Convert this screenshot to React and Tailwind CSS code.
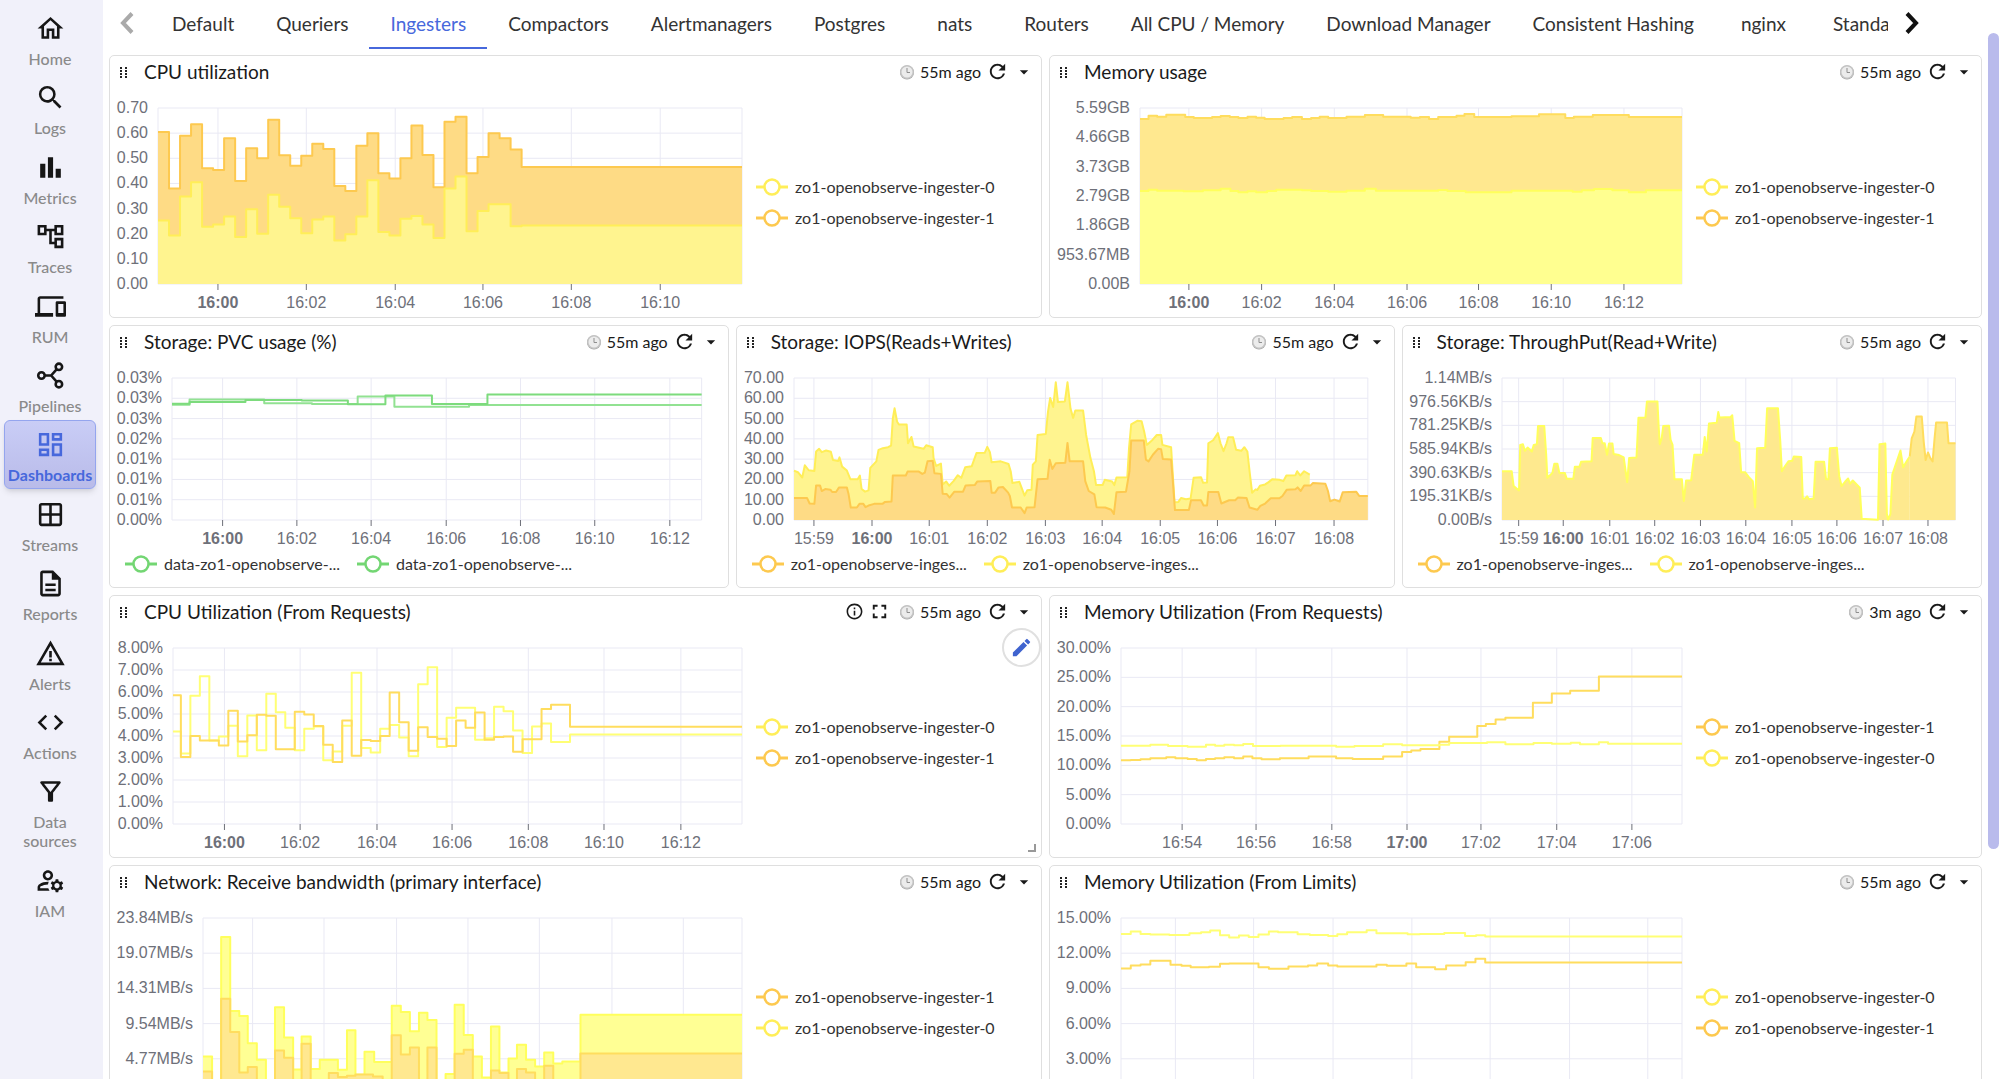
import React from "react";
import {
  MdArrowDropDown,
  MdBarChart,
  MdCode,
  MdDevices,
  MdEdit,
  MdFullscreen,
  MdOutlineAccountTree,
  MdOutlineDashboard,
  MdOutlineDescription,
  MdOutlineFilterAlt,
  MdOutlineHome,
  MdOutlineInfo,
  MdOutlineManageAccounts,
  MdRefresh,
  MdSearch,
  MdWarningAmber,
  MdOutlineWindow,
} from "react-icons/md";

const YELLOW = "#ffee58";
const AMBER = "#fdc94f";
const LEMON = "#ffff5c";
const SAND = "#ffdd5e";
const GREEN = "#73d673";

const PipelineIcon = ({ className }) => (
  <svg viewBox="0 0 24 24" fill="none" stroke="currentColor" strokeWidth="2" className={className}>
    <circle cx="5" cy="12" r="2.500" />
    <circle cx="18.500" cy="5.300" r="2.500" />
    <circle cx="18.500" cy="18.700" r="2.500" />
    <path d="M7.500 12h5l4.200-4.800M12.500 12l4.200 4.800" />
  </svg>
);

const ClockIcon = ({ className }) => (
  <svg viewBox="0 0 16 16" fill="none" className={className}>
    <circle cx="8" cy="8.500" r="7" fill="#a3a3a3" />
    <circle cx="8" cy="8" r="7" fill="#c4c4c4" />
    <circle cx="8" cy="8" r="5.500" fill="#ececec" />
    <path d="M8 4v4.500h3" stroke="#8f8f8f" strokeWidth="1" />
  </svg>
);

const DragIcon = ({ className }) => (
  <svg viewBox="0 0 8 12" fill="#222222" className={className}>
    {[1, 4, 7, 10].map((y) => (
      <g key={y}>
        <rect x="0" y={y} width="2" height="2" />
        <rect x="5" y={y} width="2" height="2" />
      </g>
    ))}
  </svg>
);

const navItems = [
  { name: "Home", icon: MdOutlineHome },
  { name: "Logs", icon: MdSearch },
  { name: "Metrics", icon: MdBarChart },
  { name: "Traces", icon: MdOutlineAccountTree },
  { name: "RUM", icon: MdDevices },
  { name: "Pipelines", icon: PipelineIcon },
  { name: "Dashboards", icon: MdOutlineDashboard, active: true },
  { name: "Streams", icon: MdOutlineWindow },
  { name: "Reports", icon: MdOutlineDescription },
  { name: "Alerts", icon: MdWarningAmber },
  { name: "Actions", icon: MdCode },
  { name: "Data sources", icon: MdOutlineFilterAlt },
  { name: "IAM", icon: MdOutlineManageAccounts },
];

const tabs = [
  "Default",
  "Queriers",
  "Ingesters",
  "Compactors",
  "Alertmanagers",
  "Postgres",
  "nats",
  "Routers",
  "All CPU / Memory",
  "Download Manager",
  "Consistent Hashing",
  "nginx",
  "Standalone",
];

// evenly spaced samples -> flat [x, y, x, y...] list
const spread = (start, first, width, values) =>
  values.flatMap((v, i) => [i === 0 ? start : first + width * (i - 1), v]);

const ingester0 = { label: "zo1-openobserve-ingester-0", color: YELLOW };
const ingester1 = { label: "zo1-openobserve-ingester-1", color: AMBER };

const panels = [
  {
    title: "CPU utilization",
    span: "col-span-24",
    inset: "pl-[48px]",
    x: [0, 53],
    y: [0, 0.7],
    yLabels: ["0.70", "0.60", "0.50", "0.40", "0.30", "0.20", "0.10", "0.00"],
    ticks: [5.44, 13.46, 21.53, 29.49, 37.51, 45.58],
    xLabels: ["16:00", "16:02", "16:04", "16:06", "16:08", "16:10"],
    legend: [ingester0, ingester1],
    series: [
      {
        step: true,
        stroke: AMBER,
        fill: "#fedb85",
        data: spread(0, 1, 1, [
          0.605, 0.38, 0.59, 0.635, 0.46, 0.453, 0.58, 0.41, 0.54, 0.5, 0.653, 0.512, 0.47, 0.51, 0.558,
          0.537, 0.39, 0.37, 0.55, 0.6, 0.44, 0.42, 0.5, 0.63, 0.513, 0.385, 0.645, 0.665, 0.44, 0.505,
          0.6, 0.58, 0.535, 0.465,
        ]),
      },
      {
        step: true,
        stroke: YELLOW,
        fill: "#fff48f",
        data: spread(0, 1, 1, [
          0.253, 0.193, 0.348, 0.405, 0.228, 0.237, 0.268, 0.187, 0.297, 0.2, 0.355, 0.307, 0.262, 0.202,
          0.257, 0.268, 0.173, 0.198, 0.268, 0.413, 0.207, 0.193, 0.26, 0.27, 0.237, 0.183, 0.38, 0.428,
          0.21, 0.29, 0.317, 0.317, 0.23, 0.233,
        ]),
      },
    ],
  },
  {
    title: "Memory usage",
    span: "col-span-24",
    inset: "pl-[90px]",
    x: [162, 1049],
    y: [853, 323],
    yLabels: ["5.59GB", "4.66GB", "3.73GB", "2.79GB", "1.86GB", "953.67MB", "0.00B"],
    ticks: [242, 361, 480, 599, 716, 835, 954],
    xLabels: ["16:00", "16:02", "16:04", "16:06", "16:08", "16:10", "16:12"],
    legend: [ingester0, ingester1],
    series: [
      {
        step: true,
        stroke: SAND,
        fill: "#ffe88f",
        data: [
          162, 356, 176, 346, 190, 349, 205, 343, 236, 350, 250, 353, 280, 350, 294, 347, 309, 350, 323, 353,
          338, 349, 352, 352, 366, 356, 397, 353, 411, 350, 427, 356, 442, 353, 456, 349, 470, 353, 500, 349,
          530, 344, 560, 349, 605, 352, 620, 350, 635, 356, 650, 350, 680, 346, 693, 341, 709, 350, 770, 348,
          815, 342, 858, 353, 872, 349, 903, 344, 962, 350,
        ],
      },
      {
        step: true,
        stroke: LEMON,
        fill: "#ffff90",
        data: [
          162, 573, 176, 569, 190, 572, 233, 574, 265, 571, 294, 566, 310, 573, 323, 577, 338, 574, 352, 577,
          370, 573, 385, 569, 427, 571, 442, 573, 470, 575, 500, 572, 530, 566, 548, 572, 650, 570, 665, 573,
          695, 577, 770, 572, 870, 575, 885, 571, 905, 567, 935, 571, 962, 577, 990, 571,
        ],
      },
    ],
  },
  {
    title: "Storage: PVC usage (%)",
    span: "col-span-16",
    inset: "pl-[62px] pr-[26px]",
    below: true,
    x: [177, 1475],
    y: [618, 187],
    yLabels: ["0.03%", "0.03%", "0.03%", "0.02%", "0.01%", "0.01%", "0.01%", "0.00%"],
    ticks: [301, 483, 665, 849, 1031, 1213, 1397],
    xLabels: ["16:00", "16:02", "16:04", "16:06", "16:08", "16:10", "16:12"],
    legend: [
      { label: "data-zo1-openobserve-...", color: GREEN },
      { label: "data-zo1-openobserve-...", color: GREEN },
    ],
    series: [
      {
        step: true,
        stroke: "#92e292",
        data: [177, 268, 220, 252, 403, 264, 520, 266, 632, 243, 722, 274, 905, 269],
      },
      {
        step: true,
        stroke: "#7ddb7d",
        data: [177, 265, 220, 260, 357, 254, 495, 255, 608, 267, 700, 240, 814, 266, 950, 237],
      },
    ],
  },
  {
    title: "Storage: IOPS(Reads+Writes)",
    span: "col-span-17",
    inset: "pl-[57px] pr-[26px]",
    below: true,
    x: [148, 1472],
    y: [618, 187],
    yLabels: ["70.00", "60.00", "50.00", "40.00", "30.00", "20.00", "10.00", "0.00"],
    ticks: [194, 328, 460, 594, 728, 859, 993, 1125, 1259, 1394],
    xLabels: ["15:59", "16:00", "16:01", "16:02", "16:03", "16:04", "16:05", "16:06", "16:07", "16:08"],
    legend: [
      { label: "zo1-openobserve-inges...", color: AMBER },
      { label: "zo1-openobserve-inges...", color: YELLOW },
    ],
    series: [
      {
        stroke: YELLOW,
        fill: "#fff48f",
        data: [
          148, 468, 157, 473, 167, 489, 173, 452, 182, 467, 195, 469, 199, 410, 206, 402, 212, 412, 222, 407,
          233, 411, 238, 436, 250, 439, 253, 428, 259, 456, 270, 468, 278, 494, 295, 494, 300, 483, 304, 524,
          312, 532, 320, 528, 324, 460, 338, 440, 343, 405, 353, 400, 365, 397, 372, 392, 376, 310, 380, 279,
          386, 320, 390, 328, 408, 328, 411, 385, 419, 366, 424, 395, 447, 402, 453, 391, 468, 397, 470, 430,
          476, 454, 487, 447, 491, 510, 499, 501, 506, 514, 516, 500, 526, 482, 534, 490, 543, 458, 558, 455,
          569, 415, 588, 414, 594, 396, 600, 412, 604, 443, 625, 440, 643, 448, 648, 470, 652, 506, 668, 502,
          680, 544, 686, 528, 696, 526, 699, 450, 706, 440, 710, 360, 729, 357, 734, 290, 739, 248, 746, 275,
          752, 200, 757, 260, 773, 258, 779, 200, 786, 280, 792, 308, 797, 286, 815, 286, 822, 360, 832, 430,
          840, 470, 845, 512, 860, 512, 865, 496, 882, 501, 887, 512, 892, 489, 917, 488, 921, 400, 926, 328,
          940, 317, 950, 318, 956, 350, 962, 390, 975, 375, 985, 360, 995, 360, 998, 390, 1018, 397, 1022, 480,
          1026, 564, 1035, 563, 1041, 551, 1052, 555, 1063, 553, 1070, 490, 1087, 488, 1092, 505, 1101, 504,
          1104, 385, 1115, 376, 1126, 354, 1132, 385, 1139, 409, 1146, 385, 1150, 367, 1161, 367, 1168, 405,
          1180, 408, 1187, 397, 1194, 410, 1200, 480, 1205, 535, 1213, 525, 1217, 527, 1223, 514, 1235, 510,
          1243, 503, 1252, 494, 1268, 496, 1277, 500, 1284, 483, 1305, 482, 1309, 470, 1316, 483, 1325, 470,
          1338, 480,
        ],
      },
      {
        stroke: AMBER,
        fill: "#fedb85",
        data: [
          148, 551, 178, 551, 184, 568, 195, 569, 199, 513, 208, 513, 212, 530, 220, 524, 232, 526, 236, 533,
          245, 533, 252, 519, 270, 519, 274, 540, 279, 580, 293, 580, 299, 569, 308, 569, 313, 579, 322, 573,
          333, 569, 352, 569, 358, 563, 373, 562, 376, 483, 406, 483, 410, 471, 436, 471, 444, 478, 450, 474,
          456, 440, 468, 438, 472, 476, 487, 478, 491, 538, 500, 539, 507, 550, 518, 532, 538, 532, 544, 513,
          565, 512, 571, 501, 601, 500, 604, 535, 612, 535, 620, 519, 630, 518, 642, 535, 646, 545, 651, 580,
          671, 580, 680, 597, 685, 580, 703, 579, 710, 494, 733, 493, 738, 435, 744, 463, 752, 446, 774, 444,
          779, 384, 784, 440, 815, 440, 820, 500, 828, 530, 841, 540, 846, 579, 866, 580, 880, 587, 886, 600,
          892, 534, 914, 532, 922, 470, 926, 377, 955, 377, 960, 435, 966, 440, 976, 420, 988, 402, 995, 403,
          999, 433, 1018, 434, 1022, 500, 1027, 588, 1059, 588, 1064, 558, 1087, 558, 1093, 574, 1101, 574,
          1104, 533, 1127, 533, 1134, 568, 1152, 558, 1166, 558, 1172, 550, 1192, 551, 1199, 580, 1217, 587,
          1224, 575, 1235, 568, 1248, 552, 1268, 552, 1275, 545, 1285, 526, 1305, 525, 1310, 519, 1317, 530,
          1325, 513, 1340, 513, 1345, 506, 1374, 508, 1380, 530, 1385, 561, 1395, 556, 1407, 562, 1414, 534,
          1445, 532, 1452, 545, 1472, 545,
        ],
      },
    ],
  },
  {
    title: "Storage: ThroughPut(Read+Write)",
    span: "col-span-15",
    inset: "pl-[99px] pr-[26px]",
    below: true,
    x: [288, 1458],
    y: [618, 187],
    yLabels: ["1.14MB/s", "976.56KB/s", "781.25KB/s", "585.94KB/s", "390.63KB/s", "195.31KB/s", "0.00B/s"],
    ticks: [331, 446, 566, 682, 800, 917, 1036, 1152, 1271, 1387],
    xLabels: ["15:59", "16:00", "16:01", "16:02", "16:03", "16:04", "16:05", "16:06", "16:07", "16:08"],
    legend: [
      { label: "zo1-openobserve-inges...", color: AMBER },
      { label: "zo1-openobserve-inges...", color: YELLOW },
    ],
    series: [
      {
        stroke: LEMON,
        fill: "#fee98e",
        data: [
          288, 470, 313, 470, 318, 515, 325, 522, 332, 528, 335, 390, 342, 388, 347, 408, 354, 398, 365, 410,
          370, 390, 378, 388, 381, 333, 397, 333, 402, 420, 405, 490, 412, 482, 418, 475, 423, 447, 431, 447,
          436, 475, 450, 475, 455, 493, 472, 493, 476, 456, 488, 456, 492, 441, 519, 440, 522, 369, 543, 369,
          547, 385, 553, 385, 559, 420, 564, 386, 573, 386, 576, 418, 590, 421, 602, 428, 607, 470, 611, 503,
          616, 430, 635, 428, 640, 308, 658, 307, 662, 258, 689, 258, 692, 330, 695, 388, 700, 370, 704, 333,
          719, 332, 723, 375, 728, 390, 733, 494, 752, 494, 757, 560, 763, 498, 776, 497, 784, 420, 806, 420,
          811, 366, 816, 410, 822, 325, 842, 323, 846, 290, 849, 307, 878, 305, 882, 300, 888, 378, 900, 385,
          905, 473, 915, 473, 925, 488, 935, 500, 941, 580, 946, 400, 967, 399, 972, 279, 1000, 279, 1006, 380,
          1010, 470, 1018, 455, 1027, 440, 1037, 438, 1041, 425, 1060, 427, 1064, 553, 1070, 553, 1075, 546,
          1080, 555, 1092, 553, 1097, 441, 1119, 441, 1124, 494, 1130, 494, 1134, 400, 1152, 399, 1158, 485,
          1164, 515, 1173, 502, 1181, 492, 1186, 508, 1193, 498, 1201, 508, 1211, 520, 1216, 614, 1258, 617,
          1262, 388, 1277, 386, 1281, 600, 1284, 617, 1290, 600, 1295, 480, 1305, 445, 1316, 407, 1323, 458,
          1332, 440, 1340, 425,
        ],
      },
      {
        stroke: SAND,
        fill: "#fee98e",
        data: [
          1340, 425, 1345, 370, 1352, 350, 1357, 304, 1371, 304, 1376, 380, 1381, 436, 1387, 413, 1393, 430,
          1399, 440, 1404, 370, 1408, 322, 1436, 322, 1440, 385, 1458, 385,
        ],
      },
    ],
  },
  {
    title: "CPU Utilization (From Requests)",
    span: "col-span-24",
    inset: "pl-[63px]",
    hovered: true,
    x: [120, 1060],
    y: [0, 8],
    yLabels: ["8.00%", "7.00%", "6.00%", "5.00%", "4.00%", "3.00%", "2.00%", "1.00%", "0.00%"],
    ticks: [205, 330, 457, 581, 707, 832, 959],
    xLabels: ["16:00", "16:02", "16:04", "16:06", "16:08", "16:10", "16:12"],
    legend: [ingester0, ingester1],
    series: [
      {
        step: true,
        stroke: "#ffff75",
        data: spread(120, 133, 15.68, [
          4.2, 3.2, 5.83, 6.72, 3.8, 3.98, 4.47, 3.08, 4.93, 3.35, 5.92, 5.08, 4.37, 3.35, 4.33, 4.43, 2.9,
          3.3, 4.47, 6.88, 3.45, 3.25, 4.33, 4.5, 3.93, 3.08, 6.35, 7.12, 3.5, 4.83, 5.28, 5.28, 3.83, 3.9,
          5.33, 5.12, 4.25, 3.23, 4.43, 4.57, 3.73, 3.73, 4.07,
        ]),
      },
      {
        step: true,
        stroke: SAND,
        data: spread(120, 133, 15.68, [
          5.85, 3.05, 4, 3.8, 3.8, 3.57, 5.15, 3.75, 4.03, 4.97, 4.92, 3.4, 3.4, 5.1, 4.98, 4.45, 3.6, 2.82,
          4.7, 3.1, 3.82, 3.77, 4, 5.98, 4.62, 3.33, 4.4, 3.95, 3.87, 3.55, 4.7, 4.38, 5.07, 3.83, 3.95, 3.98,
          3.28, 3.85, 3.85, 5.23, 5.42, 5.42, 4.42,
        ]),
      },
    ],
  },
  {
    title: "Memory Utilization (From Requests)",
    span: "col-span-24",
    inset: "pl-[71px]",
    age: "3m ago",
    x: [131, 1049],
    y: [703, 173],
    yLabels: ["30.00%", "25.00%", "20.00%", "15.00%", "10.00%", "5.00%", "0.00%"],
    ticks: [231, 352, 476, 599, 720, 844, 967],
    xLabels: ["16:54", "16:56", "16:58", "17:00", "17:02", "17:04", "17:06"],
    legend: [ingester1, ingester0],
    series: [
      {
        step: true,
        stroke: SAND,
        data: [
          131, 511, 147, 510, 163, 508, 179, 505, 205, 502, 220, 505, 240, 507, 255, 511, 270, 507, 285, 505,
          300, 502, 316, 505, 331, 500, 346, 505, 361, 508, 391, 505, 438, 500, 483, 505, 510, 507, 560, 500,
          591, 486, 606, 482, 621, 477, 652, 455, 668, 440, 714, 408, 728, 402, 744, 388, 760, 383, 805, 338,
          836, 310, 866, 302, 913, 259,
        ],
      },
      {
        step: true,
        stroke: "#ffff75",
        data: [
          131, 467, 179, 464, 208, 468, 240, 470, 270, 464, 285, 467, 300, 464, 316, 466, 331, 462, 347, 468,
          392, 467, 483, 470, 513, 468, 560, 463, 591, 466, 652, 464, 668, 459, 730, 457, 760, 463, 806, 459,
          836, 461, 867, 458, 882, 463, 913, 457, 928, 461,
        ],
      },
    ],
  },
  {
    title: "Network: Receive bandwidth (primary interface)",
    span: "col-span-24",
    inset: "pl-[93px]",
    x: [169, 1060],
    y: [703, 173],
    yLabels: ["23.84MB/s", "19.07MB/s", "14.31MB/s", "9.54MB/s", "4.77MB/s", "0.00B/s"],
    ticks: [251, 369, 489, 607, 725, 845, 963],
    xLabels: ["16:00", "16:02", "16:04", "16:06", "16:08", "16:10", "16:12"],
    legend: [ingester1, ingester0],
    series: [
      {
        step: true,
        stroke: LEMON,
        fill: "#ffff94",
        data: [
          169, 590, 184, 703, 199, 230, 214, 453, 229, 468, 243, 550, 258, 600, 273, 703, 288, 442, 303, 533,
          318, 629, 332, 530, 347, 628, 362, 600, 392, 630, 407, 511, 421, 645, 436, 576, 452, 607, 481, 437,
          496, 456, 511, 514, 526, 458, 540, 480, 555, 703, 570, 643, 585, 434, 600, 525, 615, 590, 630, 653,
          645, 500, 659, 638, 674, 596, 688, 555, 703, 600, 718, 620, 733, 578, 748, 611, 763, 605, 793, 464,
        ],
      },
      {
        step: true,
        stroke: SAND,
        fill: "#ffe890",
        data: [
          169, 635, 184, 703, 199, 416, 214, 516, 229, 638, 243, 622, 258, 670, 273, 703, 288, 572, 303, 594,
          318, 670, 332, 552, 347, 670, 377, 640, 392, 652, 407, 648, 421, 644, 450, 650, 466, 670, 481, 526,
          496, 584, 511, 563, 526, 680, 540, 563, 555, 703, 585, 582, 600, 570, 615, 690, 645, 632, 659, 640,
          674, 670, 688, 628, 703, 638, 718, 670, 733, 618, 748, 670, 793, 581,
        ],
      },
    ],
  },
  {
    title: "Memory Utilization (From Limits)",
    span: "col-span-24",
    inset: "pl-[71px]",
    x: [131, 1049],
    y: [703, 173],
    yLabels: ["15.00%", "12.00%", "9.00%", "6.00%", "3.00%", "0.00%"],
    ticks: [220, 348, 478, 607, 735, 865, 993],
    xLabels: ["16:00", "16:02", "16:04", "16:06", "16:08", "16:10", "16:12"],
    legend: [ingester0, ingester1],
    series: [
      {
        step: true,
        stroke: "#ffff75",
        data: [
          131, 221, 147, 214, 163, 221, 179, 223, 210, 224, 243, 219, 262, 216, 277, 211, 293, 225, 308, 232,
          324, 226, 340, 230, 356, 223, 373, 214, 388, 216, 420, 222, 440, 224, 470, 227, 485, 222, 501, 216,
          533, 210, 549, 219, 600, 222, 620, 221, 660, 218, 694, 227, 712, 225, 727, 229,
        ],
      },
      {
        step: true,
        stroke: SAND,
        data: [
          131, 325, 147, 316, 163, 313, 179, 302, 212, 314, 230, 317, 245, 321, 275, 320, 293, 311, 308, 310,
          356, 321, 373, 326, 405, 319, 437, 316, 452, 310, 470, 316, 485, 319, 549, 314, 566, 317, 598, 310,
          614, 321, 645, 327, 663, 316, 695, 306, 711, 296, 727, 307,
        ],
      },
    ],
  },
];

function Chart({ panel }) {
  const { x, y, yLabels, ticks, xLabels, series } = panel;
  const px = (v) => ((v - x[0]) / (x[1] - x[0])) * 1000;
  const py = (v) => ((v - y[1]) / (y[0] - y[1])) * 1000;

  // the viewBox is 1000 x 1000 and stretches to the plot area
  const outline = (s) => {
    let d = `M${px(s.data[0])} ${py(s.data[1])}`;
    for (let i = 2; i < s.data.length; i += 2) {
      d += s.step
        ? `H${px(s.data[i])}V${py(s.data[i + 1])}`
        : `L${px(s.data[i])} ${py(s.data[i + 1])}`;
    }
    return s.step ? `${d}H1000` : d;
  };
  const area = (s) => {
    const end = s.step ? 1000 : px(s.data[s.data.length - 2]);
    return `${outline(s)}L${end} 1000L${px(s.data[0])} 1000Z`;
  };

  return (
    <svg className="block h-full w-full overflow-visible" role="img" aria-label={panel.title}>
      <g stroke="#e9e9f4" strokeWidth="1">
        {yLabels.map((_, i) => {
          const pos = `${(i / (yLabels.length - 1)) * 100}%`;
          return <line key={i} x1="0" x2="100%" y1={pos} y2={pos} />;
        })}
        {ticks.map((t) => (
          <line key={t} x1={`${px(t) / 10}%`} x2={`${px(t) / 10}%`} y1="0" y2="100%" />
        ))}
        <line x1="0" x2="0" y1="0" y2="100%" />
        <line x1="100%" x2="100%" y1="0" y2="100%" />
      </g>

      <svg width="100%" height="100%" viewBox="0 0 1000 1000" preserveAspectRatio="none" className="overflow-visible">
        {series.map((s, i) => (
          <g key={i}>
            {s.fill && <path d={area(s)} fill={s.fill} />}
            <path
              d={outline(s)}
              fill="none"
              stroke={s.stroke}
              strokeWidth="2"
              strokeLinejoin="round"
              vectorEffect="non-scaling-stroke"
            />
          </g>
        ))}
      </svg>

      <g className="fill-[#6e7079] font-['Liberation_Sans',sans-serif] text-[16px]">
        {yLabels.map((label, i) => (
          <text key={i} x="-10" y={`${(i / (yLabels.length - 1)) * 100}%`} dy="5" textAnchor="end">
            {label}
          </text>
        ))}
        <svg y="100%" width="100%" height="30" className="overflow-visible">
          {ticks.map((t, i) => (
            <g key={t}>
              <line x1={`${px(t) / 10}%`} x2={`${px(t) / 10}%`} y1="0" y2="6" stroke="#6e7079" />
              <text
                x={`${px(t) / 10}%`}
                y="24"
                textAnchor="middle"
                className={xLabels[i] === "16:00" || xLabels[i] === "17:00" ? "font-bold" : ""}
              >
                {xLabels[i]}
              </text>
            </g>
          ))}
        </svg>
      </g>
    </svg>
  );
}

function LegendItem({ item }) {
  return (
    <div className="flex h-[31px] w-[232px] items-center gap-[7px] whitespace-nowrap text-[16px] text-[#333333]">
      <svg width="32" height="20" viewBox="0 0 32 20" className="shrink-0">
        <path d="M0 10h32" stroke={item.color} strokeWidth="3" />
        <circle cx="16" cy="10" r="7.500" fill="#ffffff" stroke={item.color} strokeWidth="2.500" />
      </svg>
      <span>{item.label}</span>
    </div>
  );
}

function Panel({ panel }) {
  return (
    <section
      className={`relative flex h-[263px] flex-col rounded-[5px] border border-[#dfdfdf] bg-white ${panel.span}`}
    >
      <header className="flex h-[31px] shrink-0 items-center pr-[7px] pl-[10px] text-[#1a1a1a]">
        <DragIcon className="h-[12px] w-[8px]" />
        <h2 className="ml-[16px] flex-1 truncate text-[19px] leading-[24px]">{panel.title}</h2>
        {panel.hovered && (
          <>
            <button type="button" aria-label="Panel info" className="mr-[4px]">
              <MdOutlineInfo className="size-[19px]" />
            </button>
            <button type="button" aria-label="Full screen" className="mr-[8px]">
              <MdFullscreen className="size-[23px]" />
            </button>
          </>
        )}
        <ClockIcon className="size-[16px]" />
        <span className="ml-[5px] text-[16px]">{panel.age || "55m ago"}</span>
        <button type="button" aria-label="Refresh" className="ml-[5px]">
          <MdRefresh className="size-[23px]" />
        </button>
        <button type="button" aria-label="Panel menu" className="ml-[5px]">
          <MdArrowDropDown className="size-[20px]" />
        </button>
      </header>

      {panel.below ? (
        <>
          <div className={`min-h-0 flex-1 pt-[21px] pb-[28px] ${panel.inset}`}>
            <Chart panel={panel} />
          </div>
          <div className="mb-[8px] flex pl-[15px]">
            {panel.legend.map((item, i) => (
              <LegendItem key={i} item={item} />
            ))}
          </div>
        </>
      ) : (
        <div className="flex min-h-0 flex-1">
          <div className={`min-w-0 flex-1 pt-[21px] pb-[33px] ${panel.inset}`}>
            <Chart panel={panel} />
          </div>
          <div className="flex w-[299px] flex-col justify-center pl-[14px]">
            {panel.legend.map((item, i) => (
              <LegendItem key={i} item={item} />
            ))}
          </div>
        </div>
      )}

      {panel.hovered && (
        <>
          <button
            type="button"
            aria-label="Edit panel"
            className="absolute top-[32px] right-0 flex size-[39px] items-center justify-center rounded-full border-2 border-[#e0e0e0] bg-white text-[#3f63cf]"
          >
            <MdEdit className="size-[23px]" />
          </button>
          <span className="absolute right-[5px] bottom-[5px] size-[8px] border-r-2 border-b-2 border-[#999999]" />
        </>
      )}
    </section>
  );
}

function Sidebar() {
  return (
    <aside className="w-[103px] shrink-0 bg-[#f1f1fa]">
      <nav className="flex h-6/7 w-[96px] flex-col justify-between pt-[4px] pl-[4px]">
        {navItems.map(({ name, icon: Icon, active }) => (
          <a
            key={name}
            href="#"
            className={
              `flex min-h-[69px] flex-col items-center rounded-[6px] border pt-[8px] pb-[4px] text-center text-[16px] leading-[19px] ` +
              (active
                ? "border-[#94a5ee] bg-linear-to-b from-[#c9cdf6] to-[#b9bbe9] font-bold text-[#4768dc] shadow-md"
                : "border-transparent font-medium text-[#8a8a8a]")
            }
          >
            <Icon className={active ? "size-[31px] text-[#4768dc]" : "size-[31px] text-[#161616]"} />
            <span className={name === "Data sources" ? "mt-[5px] w-[60px]" : "mt-[5px]"}>{name}</span>
          </a>
        ))}
      </nav>
    </aside>
  );
}

function TabBar() {
  return (
    <div className="flex h-[50px] items-start pr-[54px]">
      <button type="button" aria-label="Previous tabs" className="flex h-[46px] w-[48px] items-center justify-center">
        <svg width="14" height="22" viewBox="0 0 14 22" fill="none" stroke="#aaaaaa" strokeWidth="4">
          <path d="M12 1.500L3 11l9 9.500" />
        </svg>
      </button>
      <div className="flex min-w-0 flex-1 overflow-hidden">
        {tabs.map((tab) => (
          <button
            key={tab}
            type="button"
            className={
              `h-[49px] min-w-[97px] shrink-0 border-b-2 px-[21px] pt-[2px] text-[19px] whitespace-nowrap ` +
              (tab === "Ingesters" ? "border-[#4768dc] text-[#4768dc]" : "border-transparent text-[#333333]")
            }
          >
            {tab}
          </button>
        ))}
      </div>
      <button type="button" aria-label="Next tabs" className="flex h-[46px] w-[46px] items-center justify-center">
        <svg width="15" height="22" viewBox="0 0 15 22" fill="none" stroke="#111111" strokeWidth="4">
          <path d="M3 1.500l9 9.500-9 9.500" />
        </svg>
      </button>
    </div>
  );
}

export default function App() {
  return (
    <div className="flex h-screen overflow-hidden bg-white font-['Lato',sans-serif]">
      <Sidebar />
      <main className="min-w-0 flex-1 overflow-hidden">
        <TabBar />
        <div className="grid grid-cols-[repeat(48,minmax(0,1fr))] gap-[7px] pt-[5px] pr-[6px] pl-[6px]">
          {panels.map((panel) => (
            <Panel key={panel.title} panel={panel} />
          ))}
        </div>
      </main>
      {/* scroll track */}
      <div className="w-[11px] shrink-0 pt-[33px]">
        <div className="h-[78%] rounded-full bg-[#b9bbec]" />
      </div>
    </div>
  );
}
